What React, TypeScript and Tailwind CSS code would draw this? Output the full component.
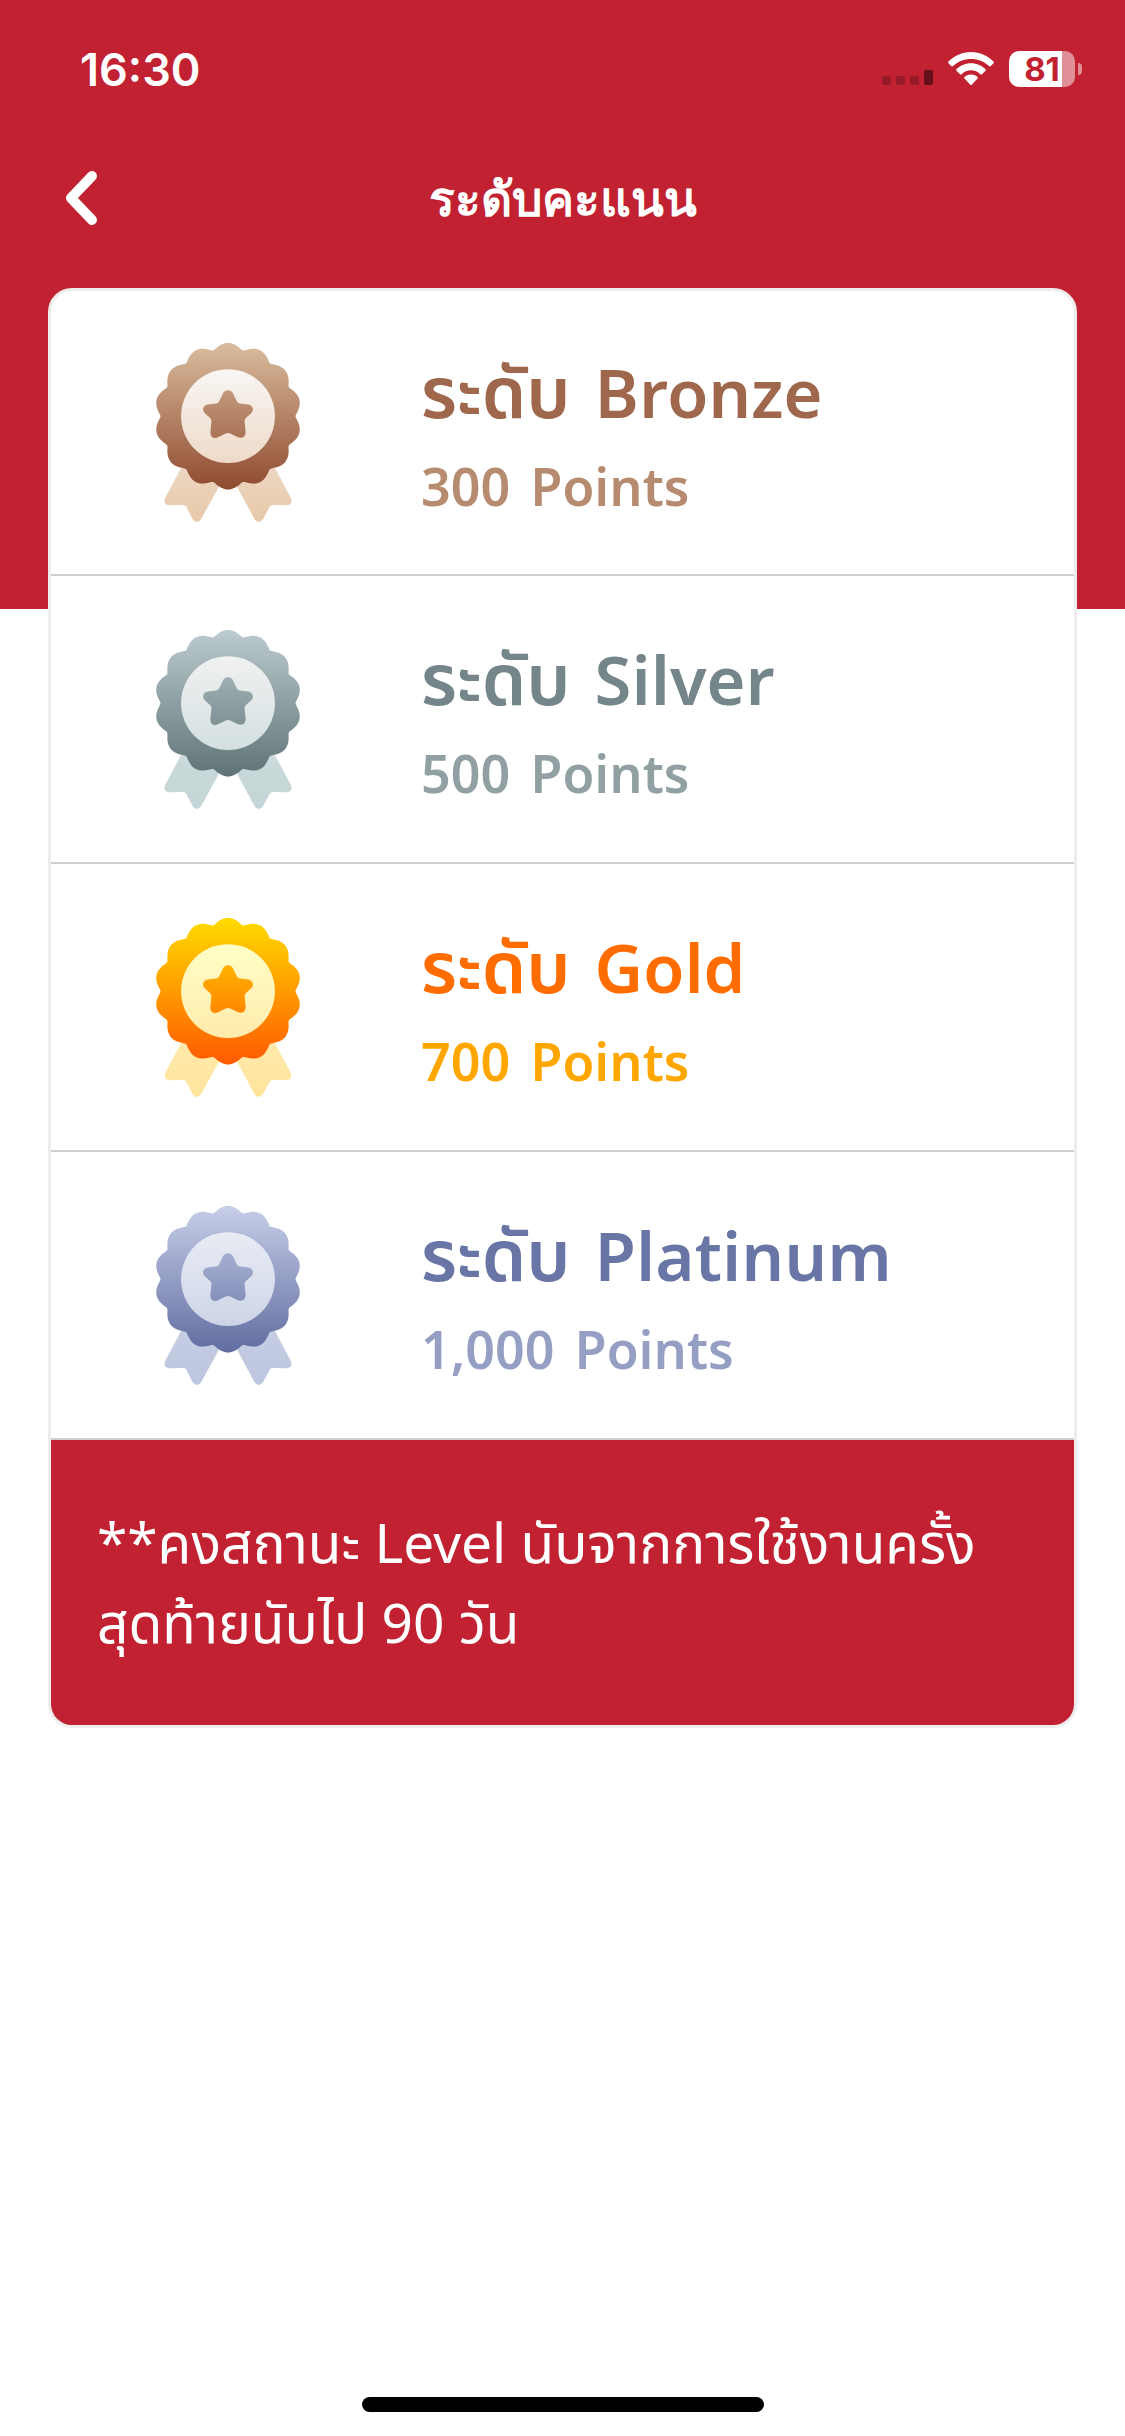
import { useId } from 'react';

type Tier = {
  name: string;
  points: string;
  titleClass: string;
  pointsClass: string;
  outer: [string, string];
  inner: [string, string];
  ribbon: [string, string];
};

const tiers: Tier[] = [
  {
    name: 'Bronze',
    points: '300',
    titleClass: 'text-[#9f674b]',
    pointsClass: 'text-[#b68b70]',
    outer: ['#dabd9e', '#8f4a2f'],
    inner: ['#f8f6f5', '#eedac8'],
    ribbon: ['#ecd6c0', '#e8c9aa'],
  },
  {
    name: 'Silver',
    points: '500',
    titleClass: 'text-[#748689]',
    pointsClass: 'text-[#91a1a3]',
    outer: ['#bccbce', '#5f7377'],
    inner: ['#f1f1f1', '#d3dfe0'],
    ribbon: ['#cbdadb', '#c3d5d6'],
  },
  {
    name: 'Gold',
    points: '700',
    titleClass: 'text-[#ff6d00]',
    pointsClass: 'text-[#ffa700]',
    outer: ['#ffdc00', '#ff5a00'],
    inner: ['#ffffc6', '#ffeaad'],
    ribbon: ['#ffe9ab', '#ffe59c'],
  },
  {
    name: 'Platinum',
    points: '1,000',
    titleClass: 'text-[#6875a5]',
    pointsClass: 'text-[#959fc4]',
    outer: ['#c7cfe8', '#616ca0'],
    inner: ['#e9ecf4', '#ccd4e6'],
    ribbon: ['#c5cde3', '#bdc6df'],
  },
];

// Outline of the medal: 14 rounded petals around the centre
function scallop(cx: number, cy: number) {
  const points: string[] = [];
  for (let i = 0; i < 336; i++) {
    const a = (i / 336) * Math.PI * 2;
    const wave = Math.sqrt(Math.cos(7 * a) ** 2 + 0.02);
    const r = 200 + 20 * wave;
    points.push(`${(cx + r * Math.sin(a)).toFixed(1)} ${(cy - r * Math.cos(a)).toFixed(1)}`);
  }
  return `M${points.join('L')}Z`;
}

const medalPath = scallop(264, 258);

function Medal({ tier }: { tier: Tier }) {
  const id = useId();
  return (
    <svg viewBox="48 38 432 538" className="h-[179px] w-36" aria-hidden="true">
      <defs>
        <linearGradient id={`${id}outer`} x1="0" y1="38" x2="0" y2="478" gradientUnits="userSpaceOnUse">
          <stop offset="0" stopColor={tier.outer[0]} />
          <stop offset="1" stopColor={tier.outer[1]} />
        </linearGradient>
        <linearGradient id={`${id}inner`} x1="0" y1="117" x2="0" y2="399" gradientUnits="userSpaceOnUse">
          <stop offset="0" stopColor={tier.inner[0]} />
          <stop offset="1" stopColor={tier.inner[1]} />
        </linearGradient>
        <linearGradient id={`${id}ribbon`} x1="0" y1="415" x2="0" y2="576" gradientUnits="userSpaceOnUse">
          <stop offset="0" stopColor={tier.ribbon[0]} />
          <stop offset="1" stopColor={tier.ribbon[1]} />
        </linearGradient>
      </defs>
      <g fill={`url(#${id}ribbon)`}>
        <path d="M130 400L75 504Q68 524 88 526L130 525Q136 525 139 531L157 566Q170 586 184 566L240 464Z" />
        <path d="M398 400L453 504Q460 524 440 526L398 525Q392 525 389 531L370 566Q356 586 343 566L288 464Z" />
      </g>
      <path d={medalPath} fill={`url(#${id}outer)`} />
      <circle cx="264" cy="258" r="141" fill={`url(#${id}inner)`} />
      <path
        fill={`url(#${id}outer)`}
        d="M264 180Q275 180 280 191L290 212Q293 219 300 220L326 223Q338 226 339 238Q339 244 333 250L317 264Q313 269 314 275L317 305Q317 323 302 323Q297 323 291 320L271 310Q264 307 257 310L237 320Q228 325 220 323Q211 319 211 306L214 275Q215 269 211 264L195 250Q188 244 189 236Q191 225 203 223L228 220Q235 219 238 212L248 191Q253 180 264 180Z"
      />
    </svg>
  );
}

function StatusBar() {
  return (
    <div className="flex h-[138px] items-center justify-between pr-[43px] pl-20 text-white">
      <span className="font-[Inter,sans-serif] text-[45px] leading-none font-semibold">16:30</span>
      <div className="flex items-center">
        <svg viewBox="0 0 52 36" className="h-9 w-[52px]" aria-hidden="true">
          <g fill="#971a28">
            <rect x="0" y="25" width="9" height="9" rx="2" />
            <rect x="14" y="25" width="9" height="9" rx="2" />
            <rect x="28" y="25" width="9" height="9" rx="2" />
          </g>
          <rect x="42" y="19" width="9" height="15" rx="2" fill="#650f1b" />
        </svg>
        <svg viewBox="0 0 46 34" className="ml-[14px] h-[34px] w-[46px]" fill="currentColor" aria-hidden="true">
          <path d="M23 0C32 0 40 4 45.500 9.500Q46.300 10.300 45.500 11.200L42.500 14.200Q41.800 14.800 41 14.100C36 9.500 30 7 23 7S10 9.500 5 14.100Q4.200 14.800 3.500 14.200L.5 11.200Q-.3 10.300 .5 9.500C6 4 14 0 23 0Z" />
          <path d="M23 11.200C29 11.200 33.800 13.600 37.500 17.100Q38.300 18 37.500 18.800L34 22.200Q33.200 22.900 32.400 22.200C29.700 19.800 26.700 18.300 23 18.300S16.300 19.800 13.600 22.200Q12.800 22.900 12 22.200L8.500 18.800Q7.700 18 8.500 17.100C12.200 13.600 17 11.200 23 11.200Z" />
          <path d="M23 22.600C26 22.600 28 23.800 29.500 25Q30.200 25.800 29.500 26.600L24 32.600Q23 33.600 22 32.600L16.500 26.600Q15.800 25.800 16.500 25C18 23.800 20 22.600 23 22.600Z" />
        </svg>
        <div className="ml-[15px] flex h-9 w-[66px] items-center justify-center rounded-[10px] bg-linear-to-r from-white from-80% to-[#e08f97] to-80%">
          <span className="font-[Inter,sans-serif] text-[33px] leading-9 font-bold text-[#c12130]">81</span>
        </div>
        <div className="ml-[3px] h-3 w-1 rounded-r-full bg-[#e08f97]" />
      </div>
    </div>
  );
}

export default function App() {
  return (
    <div className="flex min-h-screen flex-col bg-white bg-linear-to-b from-[#c12130] from-[609px] to-white to-[609px] font-['Noto_Sans_Thai','Noto_Sans',sans-serif]">
      <StatusBar />

      <header className="grid h-[150px] grid-cols-[1fr_auto_1fr] items-start px-[60px] pt-6 text-white">
        <button type="button" aria-label="ย้อนกลับ" className="flex h-[72px] w-11 items-center">
          <svg viewBox="0 0 44 60" className="h-[60px] w-11" fill="none" stroke="currentColor" strokeWidth="10" strokeLinecap="round" strokeLinejoin="round" aria-hidden="true">
            <path d="M32 8L11 30L32 52" />
          </svg>
        </button>
        <h1 className="font-[Roboto,sans-serif] text-[48px] leading-[76px] font-semibold">ระดับคะแนน</h1>
      </header>

      <main className="mx-12 overflow-hidden rounded-3xl border-3 border-[#eeecec] bg-white">
        <ul>
          {tiers.map((tier) => (
            <li key={tier.name} className="flex h-72 items-center border-b-2 border-[#d0d0d3] first:h-[285px]">
              <div className="flex w-[354px] justify-center">
                <Medal tier={tier} />
              </div>
              <div className="flex-1 pt-[18px] pl-4 font-semibold">
                <h2 className={`flex items-baseline gap-6 text-[67px] leading-[96px] ${tier.titleClass}`}>
                  <span className="text-[71px]">ระดับ</span>
                  <span>{tier.name}</span>
                </h2>
                <p className={`flex items-baseline gap-5 text-[52px] leading-[88px] ${tier.pointsClass}`}>
                  <span>{tier.points}</span>
                  <span>Points</span>
                </p>
              </div>
            </li>
          ))}
        </ul>
        <p className="bg-[#c12130] px-[46px] pt-[67px] pb-[58px] text-[55px] leading-20 text-white">
          **คงสถานะ Level นับจากการใช้งานครั้ง
          <br />
          สุดท้ายนับไป 90 วัน
        </p>
      </main>

      <div className="mx-auto mt-auto mb-6 h-[15px] w-[402px] rounded-full bg-black" />
    </div>
  );
}
